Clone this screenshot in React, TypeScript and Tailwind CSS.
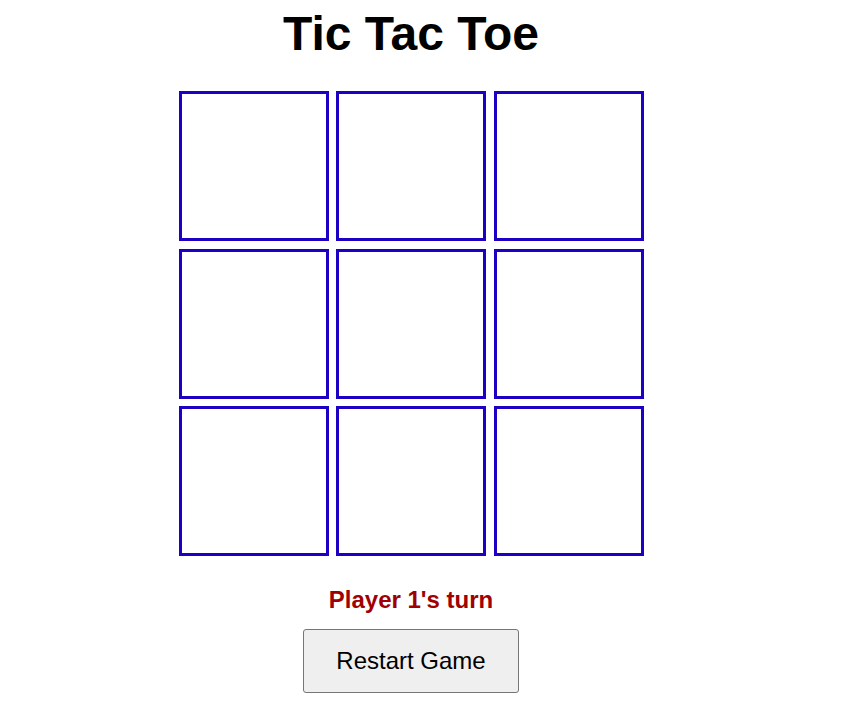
import React, { useState } from 'react';

const App: React.FC = () => {
    const [cells, setCells] = useState<string[]>(Array(9).fill(''));
    const [player, setPlayer] = useState(1);

    const play = (i: number) => {
        if (cells[i]) return;
        const next = [...cells];
        next[i] = player === 1 ? 'X' : 'O';
        setCells(next);
        setPlayer(player === 1 ? 2 : 1);
    };

    const restart = () => {
        setCells(Array(9).fill(''));
        setPlayer(1);
    };

    return (
        <div className="min-h-screen bg-white font-['Liberation_Sans',Arial,sans-serif] text-black">
            <div className="w-[822px] flex flex-col items-center">
                <h1 className="mt-[6px] mb-[30px] text-[48px] font-bold leading-[normal]">Tic Tac Toe</h1>
                <div className="grid grid-cols-[repeat(3,150px)] gap-x-[7.5px] gap-y-[7.5px]">
                    {cells.map((c, i) => (
                        <button
                            key={i}
                            onClick={() => play(i)}
                            className="w-[150px] h-[150px] border-[3px] border-[#1c00c4] bg-white flex items-center justify-center text-[64px] font-bold"
                        >
                            {c}
                        </button>
                    ))}
                </div>
                <p className="mt-[30px] text-[24px] font-bold leading-[normal] text-[#a00000]">Player {player}'s turn</p>
                <button
                    onClick={restart}
                    className="mt-[15px] w-[216px] h-[64px] flex items-center justify-center border border-[#767676] rounded-[3px] bg-[#efefef] text-[24px] leading-[normal]"
                >
                    Restart Game
                </button>
            </div>
        </div>
    );
};

export default App;
